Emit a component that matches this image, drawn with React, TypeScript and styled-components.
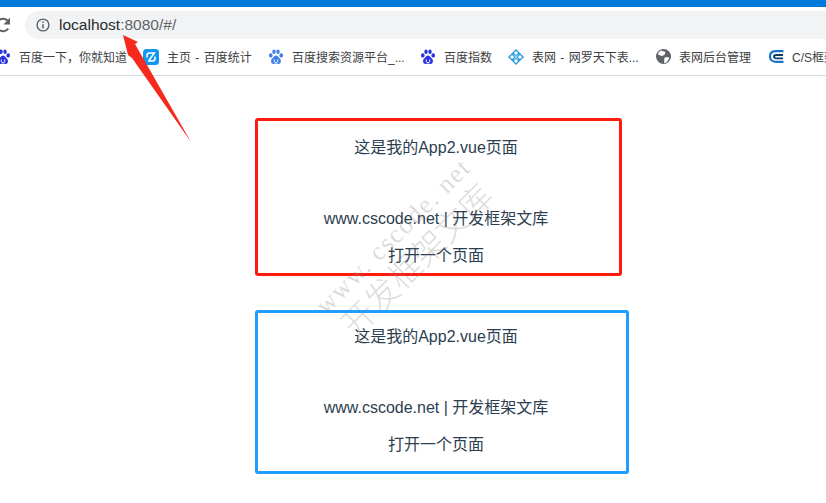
import styled, { createGlobalStyle } from "styled-components"

const GlobalStyle = createGlobalStyle`
  html, body {
    margin: 0;
    padding: 0;
    background: #fff;
    overflow: hidden;
  }
`

const Page = styled.div`
  position: relative;
  width: 826px;
  height: 503px;
  overflow: hidden;
  font-family: "Liberation Sans", "Noto Sans CJK SC", sans-serif;
`

const TitleBar = styled.div`
  height: 7px;
  background: #0078d7;
`

const Toolbar = styled.div`
  height: 32px;
  padding-top: 4px;
  box-sizing: border-box;
  display: flex;
  align-items: stretch;
  gap: 15px;
`

const Reload = styled.svg`
  flex: 0 0 10px;
  height: 28px;
`

const UrlBar = styled.div`
  flex: 1;
  height: 28px;
  background: #f1f3f4;
  border-radius: 14px 0 0 14px;
  display: flex;
  align-items: center;
  padding-left: 11px;
  gap: 9px;
  font-size: 15.5px;
  color: #5f6368;
`

const Host = styled.span`
  color: #2a2b2e;
`

const Bookmarks = styled.div`
  height: 37px;
  box-sizing: border-box;
  border-bottom: 1px solid #dadce0;
  display: flex;
  align-items: center;
  padding-bottom: 1px;
  margin-left: -5px;
  white-space: nowrap;
  overflow: hidden;
`

const Bookmark = styled.div<{ $width: number }>`
  flex: 0 0 ${({ $width }) => $width}px;
  display: flex;
  align-items: center;
  gap: 8px;
  font-size: 12px;
  word-spacing: 1px;
  color: #3c4043;
`

const IconSlot = styled.span`
  flex: 0 0 16px;
  height: 16px;
  display: flex;
  align-items: center;
  justify-content: center;
`

const Main = styled.div`
  padding: 42px 0 0 255px;
  display: flex;
  flex-direction: column;
  align-items: flex-start;
  gap: 34px;
`

const Card = styled.div<{ $color: string; $width: number; $height: number }>`
  box-sizing: border-box;
  width: ${({ $width }) => $width}px;
  height: ${({ $height }) => $height}px;
  border: 3px solid ${({ $color }) => $color};
  border-radius: 3px;
  display: flex;
  flex-direction: column;
  align-items: center;
  padding-right: ${({ $width }) => $width - 362}px;
  color: #2c3e50;
  font-size: 16px;
`

const Title = styled.div<{ $top: number }>`
  margin-top: ${({ $top }) => $top}px;
  line-height: 20px;
`

const LinkLine = styled.div`
  margin-top: 51px;
  line-height: 20px;
`

const OpenLine = styled.div`
  margin-top: 17px;
  line-height: 20px;
`

const Watermark = styled.div`
  position: absolute;
  left: 287px;
  top: 216px;
  width: 240px;
  transform: rotate(-45deg);
  transform-origin: center;
  font-family: "Liberation Serif", "Noto Sans CJK SC", serif;
  color: rgba(130, 130, 130, 0.28);
  text-align: center;
  pointer-events: none;
`

const WatermarkUrl = styled.div`
  font-size: 26px;
  line-height: 30px;
  letter-spacing: 1.500px;
  white-space: nowrap;
`

const WatermarkName = styled.div`
  font-size: 33px;
  line-height: 38px;
  font-weight: 300;
  white-space: nowrap;
`

const Arrow = styled.svg`
  position: absolute;
  left: 115px;
  top: 30px;
`

const Paw = ({ color = "#2932e1" }: { color?: string }) => (
  <svg width="16" height="16" viewBox="0 0 16 16">
    <g fill={color}>
      <ellipse cx="2.800" cy="6.400" rx="1.800" ry="2.200" />
      <ellipse cx="6" cy="2.800" rx="1.700" ry="2.300" />
      <ellipse cx="10" cy="2.800" rx="1.700" ry="2.300" />
      <ellipse cx="13.200" cy="6.400" rx="1.800" ry="2.200" />
      <path d="M8 6.500c-2 0-2.500 2-4 3.300C2.600 11 2.500 15 5.500 15c1 0 1.600-.4 2.500-.4s1.500.4 2.500.4c3 0 2.900-4 1.500-5.200C10.500 8.500 10 6.500 8 6.500z" />
    </g>
    <path d="M6.300 10.500v2c0 .8.500 1 1.700 1s1.700-.2 1.700-1v-2" fill="none" stroke="#fff" strokeWidth="1" />
  </svg>
)

const StatsIcon = () => (
  <svg width="16" height="16" viewBox="0 0 16 16">
    <rect width="16" height="16" rx="3.500" fill="#1296ef" />
    <path d="M4 8.500V6.500C4 5 5 4 6.500 4h4.800L6 11.500M12 7.500v2c0 1.500-1 2.500-2.500 2.500H5" fill="none" stroke="#fff" strokeWidth="1.500" />
  </svg>
)

const TableIcon = () => (
  <svg width="16" height="16" viewBox="0 0 16 16" fill="none">
    <path d="M8 1 11 4 8 7 5 4zM8 9 11 12 8 15 5 12zM4 5 7 8 4 11 1 8zM12 5 15 8 12 11 9 8z" stroke="#2d9fd8" strokeWidth="1.400" />
    <path d="M6 6 10 10M10 6 6 10" stroke="#86cdf0" strokeWidth="1.200" />
  </svg>
)

const GlobeIcon = () => (
  <svg width="15" height="15" viewBox="0 0 15 15">
    <circle cx="7.500" cy="7.500" r="7.500" fill="#5f6368" />
    <path d="M5 1.500 9.500 3 8.500 6 5.500 7 2 5.500 2.500 3.500zM8.500 8.500l4-.5.500 2-2.500 3.500L8 14z" fill="#fff" />
  </svg>
)

const CsIcon = () => (
  <svg width="15" height="15" viewBox="0 0 15 15" fill="none">
    <path d="M14.500 2.200H7C2.500 2.200 1 5 1 7.500s1.500 5.300 6 5.300h7.500" stroke="#1a73c8" strokeWidth="2.200" />
    <path d="M14 6H7.500C6 6 5 6.600 5 7.500S6 9.300 7.500 9.300H14" stroke="#123a66" strokeWidth="1.800" />
  </svg>
)

const bookmarks = [
  { icon: <Paw />, label: "百度一下，你就知道", width: 148 },
  { icon: <StatsIcon />, label: "主页 - 百度统计", width: 125 },
  { icon: <Paw color="#3f7fe8" />, label: "百度搜索资源平台_...", width: 152 },
  { icon: <Paw />, label: "百度指数", width: 88 },
  { icon: <TableIcon />, label: "表网 - 网罗天下表...", width: 147 },
  { icon: <GlobeIcon />, label: "表网后台管理", width: 113 },
  { icon: <CsIcon />, label: "C/S框架网", width: 80 },
]

const cards = [
  { color: "#ff1a0e", width: 367, height: 158, top: 17 },
  { color: "#1e9fff", width: 374, height: 164, top: 14 },
]

const App = () => (
  <Page>
    <GlobalStyle />
    <TitleBar />
    <Toolbar>
      <Reload viewBox="0 0 10 28" fill="none">
        <path d="M8.300 17.500A6.300 6.300 0 1 1 7.500 9.500" stroke="#5f6368" strokeWidth="2" />
        <path d="M10 6.500v7H3.500z" fill="#5f6368" />
      </Reload>
      <UrlBar>
        <svg width="14" height="14" viewBox="0 0 14 14" fill="none">
          <circle cx="7" cy="7" r="5.900" stroke="#5f6368" strokeWidth="1.400" />
          <path d="M7 6.200v4.200M7 3.500v1.500" stroke="#5f6368" strokeWidth="1.500" />
        </svg>
        <span>
          <Host>localhost</Host>:8080/#/
        </span>
      </UrlBar>
    </Toolbar>
    <Bookmarks>
      {bookmarks.map((b) => (
        <Bookmark key={b.label} $width={b.width}>
          <IconSlot>{b.icon}</IconSlot>
          <span>{b.label}</span>
        </Bookmark>
      ))}
    </Bookmarks>
    <Main>
      {cards.map((c) => (
        <Card key={c.color} $color={c.color} $width={c.width} $height={c.height}>
          <Title $top={c.top}>这是我的App2.vue页面</Title>
          <LinkLine>www.cscode.net | 开发框架文库</LinkLine>
          <OpenLine>打开一个页面</OpenLine>
        </Card>
      ))}
    </Main>
    <Watermark>
      <WatermarkUrl>www. cscode. net</WatermarkUrl>
      <WatermarkName>开发框架文库</WatermarkName>
    </Watermark>
    <Arrow width="90" height="120" viewBox="0 0 90 120">
      <path d="M8 5 23 12 20 14 76 112 17 28 13 25z" fill="#f5291c" />
    </Arrow>
  </Page>
)

export default App
